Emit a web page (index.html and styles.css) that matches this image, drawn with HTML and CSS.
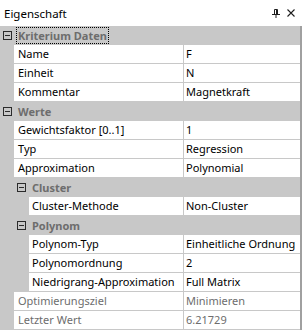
FILE: index.html
```html
<!DOCTYPE html>
<html lang="de">
<head>
  <meta charset="UTF-8" />
  <title>Eigenschaft</title>
  <link rel="stylesheet" href="styles.css">
</head>
<body>
  <div class="panel">
    <div class="titlebar">
      <span class="title">Eigenschaft</span>
      <span class="tools">
        <svg class="pin" width="8" height="9" viewBox="0 0 8 9">
          <path d="M2.5 0.5h3v5h-3z" fill="none" stroke="#1e1e1e" />
          <path d="M4.5 0v6" stroke="#1e1e1e" />
          <path d="M0 5.5h8" stroke="#1e1e1e" />
          <path d="M4 6v3" stroke="#1e1e1e" />
        </svg>
        <svg class="close" width="8" height="8" viewBox="0 0 8 8">
          <path d="M0.5 0.5l7 7M7.5 0.5l-7 7" stroke="#1e1e1e" stroke-width="1.1" />
        </svg>
      </span>
    </div>

    <div class="grid">
      <div class="cat"><span class="toggle"></span><span class="label focused">Kriterium Daten</span></div>
      <div class="prop"><div class="name">Name</div><div class="value">F</div></div>
      <div class="prop"><div class="name">Einheit</div><div class="value">N</div></div>
      <div class="prop"><div class="name">Kommentar</div><div class="value">Magnetkraft</div></div>

      <div class="cat"><span class="toggle"></span><span class="label">Werte</span></div>
      <div class="prop"><div class="name">Gewichtsfaktor [0..1]</div><div class="value">1</div></div>
      <div class="prop"><div class="name">Typ</div><div class="value">Regression</div></div>
      <div class="prop"><div class="name">Approximation</div><div class="value">Polynomial</div></div>

      <div class="cat sub"><span class="toggle"></span><span class="label">Cluster</span></div>
      <div class="prop sub"><div class="name">Cluster-Methode</div><div class="value">Non-Cluster</div></div>

      <div class="cat sub"><span class="toggle"></span><span class="label">Polynom</span></div>
      <div class="prop sub"><div class="name">Polynom-Typ</div><div class="value">Einheitliche Ordnung</div></div>
      <div class="prop sub"><div class="name">Polynomordnung</div><div class="value">2</div></div>
      <div class="prop sub"><div class="name">Niedrigrang-Approximation</div><div class="value">Full Matrix</div></div>

      <div class="prop readonly"><div class="name">Optimierungsziel</div><div class="value">Minimieren</div></div>
      <div class="prop readonly"><div class="name">Letzter Wert</div><div class="value">6.21729</div></div>
    </div>
  </div>
</body>
</html>
```

FILE: styles.css
```css
body {
  margin: 0;
  font-family: "Noto Sans", "Open Sans", sans-serif;
  font-size: 11px;
  color: #000;
  background: #fff;
}

.panel {
  width: 302px;
  height: 330px;
  overflow: hidden;
  background: #fff;
}

.titlebar {
  height: 26px;
  display: flex;
  align-items: center;
  justify-content: space-between;
  padding: 0 7px 0 4px;
  font-size: 11.5px;
}

.tools {
  display: flex;
  align-items: center;
  gap: 7px;
}

.pin {
  display: block;
  margin-top: 1px;
}

.close {
  display: block;
}

/* property grid */
.grid {
  display: flex;
  flex-direction: column;
  gap: 1px;
  background: #c8c8c8;
  border-right: 2px solid #a0a0a0;
  padding-bottom: 1px;
}

.cat {
  height: 18px;
  display: flex;
  align-items: center;
  padding-left: 3px;
  font-weight: bold;
  color: #6d6d6d;
}

.cat.sub {
  padding-left: 17px;
}

.toggle {
  width: 7px;
  height: 7px;
  border: 1px solid #2b2b2b;
  position: relative;
  margin-right: 5px;
  flex: none;
}

.toggle::after {
  content: '';
  position: absolute;
  left: 1px;
  right: 1px;
  top: 3px;
  height: 1px;
  background: #2b2b2b;
}

.label {
  line-height: 15px;
  padding: 0 1px;
}

.focused {
  outline: 1px dotted #000;
  outline-offset: 0;
}

.prop {
  height: 18px;
  display: flex;
  gap: 1px;
  padding-left: 14px;
  line-height: 18px;
}

.prop.sub {
  padding-left: 29px;
}

.name {
  flex: 1;
  background: #fff;
  padding-left: 4px;
  white-space: nowrap;
  overflow: hidden;
}

.sub .name {
  padding-left: 3px;
}

.value {
  width: 114px;
  background: #fff;
  padding-left: 2px;
  white-space: nowrap;
  overflow: hidden;
}

.readonly {
  color: #6d6d6d;
}
```
